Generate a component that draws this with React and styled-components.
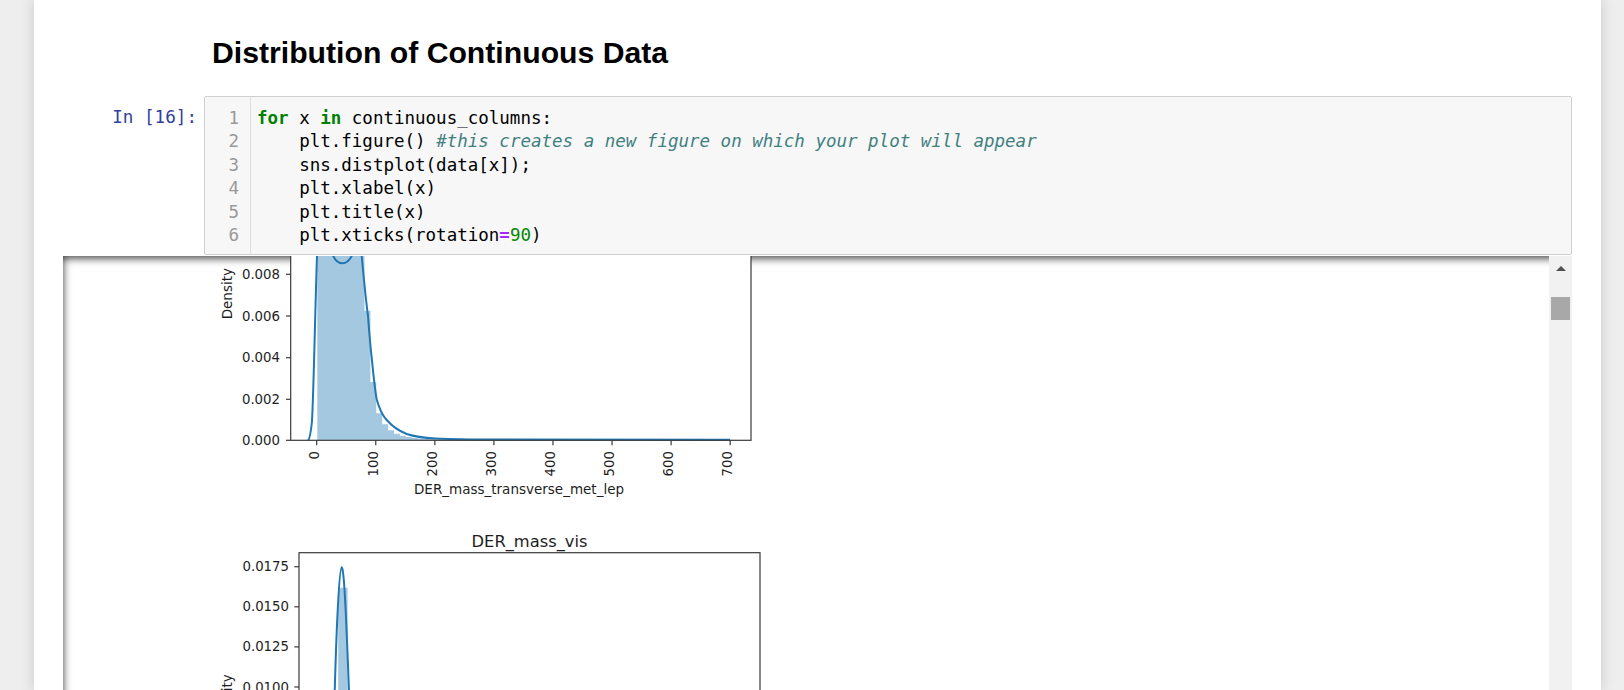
import styled, { createGlobalStyle } from "styled-components";

const GlobalStyle = createGlobalStyle`
  html, body {
    margin: 0;
    height: 100%;
    overflow: hidden;
    background: #eeeeee;
  }
  #root {
    height: 100%;
  }
`;

const Page = styled.div`
  height: 100vh;
  box-sizing: border-box;
  padding: 0 23px 0 34px;
  display: flex;
`;

const Notebook = styled.div`
  flex: 1;
  min-width: 0;
  background: #fff;
  box-shadow: 0 0 12px 1px rgba(87, 87, 87, 0.2);
  padding: 36px 29px 0 29px;
  display: flex;
  flex-direction: column;
  overflow: hidden;
`;

const CellRow = styled.div`
  display: grid;
  grid-template-columns: 141px 1fr;
  margin-bottom: ${(p) => p.$gap || 0}px;
`;

const Title = styled.h1`
  margin: 0;
  padding-left: 8px;
  font-family: "Liberation Sans", Arial, sans-serif;
  font-weight: bold;
  font-size: 30.2px;
  line-height: 34px;
  color: #000;
`;

const Prompt = styled.div`
  font-family: "DejaVu Sans Mono", monospace;
  font-size: 17.6px;
  line-height: 23.5px;
  color: #303f9f;
  text-align: right;
  padding: 10px 7px 0 0;
`;

const CodeBox = styled.div`
  display: flex;
  border: 1px solid #cfcfcf;
  border-radius: 2px;
  background: #f7f7f7;
  font-family: "DejaVu Sans Mono", monospace;
  font-size: 17.5px;
  line-height: 23.5px;
`;

const Gutter = styled.div`
  width: 46px;
  box-sizing: border-box;
  border-right: 1px solid #dddddd;
  padding: 9.5px 11px 6.5px 0;
  text-align: right;
  color: #999;
`;

const Code = styled.div`
  padding: 9.5px 0 6.5px 6px;
  color: #000;
`;

const Line = styled.div`
  white-space: pre;
`;

const tokenStyles = {
  kw: "color: #008000; font-weight: bold;",
  cm: "color: #408080; font-style: italic;",
  op: "color: #aa22ff; font-weight: bold;",
  num: "color: #008800;",
};

const Tok = styled.span`
  ${(p) => tokenStyles[p.$kind]}
`;

const OutputRow = styled.div`
  flex: none;
  height: 560px;
  margin-top: 1px;
  display: flex;
  box-shadow: inset 0 2px 8px rgba(0, 0, 0, 0.8);
`;

const OutputScroll = styled.div`
  flex: 1;
  min-width: 0;
  overflow: hidden;
  display: flex;
  flex-direction: column;
  padding-left: 141px;
`;

const Figure = styled.svg`
  display: block;
  flex-shrink: 0;
  font-family: "DejaVu Sans", sans-serif;
`;

const ScrollTrack = styled.div`
  width: 23px;
  background: #f1f1f1;
  display: flex;
  flex-direction: column;
  align-items: center;
`;

const ArrowButton = styled.div`
  height: 24px;
  display: flex;
  align-items: center;
  justify-content: center;
  &::before {
    content: "";
    border-left: 5.5px solid transparent;
    border-right: 5.5px solid transparent;
    border-bottom: 5.5px solid #505050;
  }
`;

const Thumb = styled.div`
  margin-top: 17px;
  width: 19px;
  height: 23px;
  background: #a8a8a8;
`;

const BLUE = "#1f77b4";
const FILL = "#a5c8e1";
const INK = "#1e1e1e";
const SPINE = "#3a3a3a";

const codeLines = [
  [["kw", "for"], [null, " x "], ["kw", "in"], [null, " continuous_columns:"]],
  [[null, "    plt.figure() "], ["cm", "#this creates a new figure on which your plot will appear"]],
  [[null, "    sns.distplot(data[x]);"]],
  [[null, "    plt.xlabel(x)"]],
  [[null, "    plt.title(x)"]],
  [[null, "    plt.xticks(rotation"], ["op", "="], ["num", "90"], [null, ")"]],
];

// histogram heights (px) for the first figure, bin width 5.9px
const hist1 = [
  240, 330, 345, 320, 300, 310, 290, 230, 129.6, 58.3, 27, 16, 10, 6.5, 4.5, 3.2,
  2.4, 1.8, 1.4, 1.1, 0.9, 0.8, 0.7, 0.6, 0.6, 0.5, 0.5, 0.5, 0.4, 0.4, 0.4, 0.4,
  0.4, 0.4, 0.4, 0.4, 0.3, 0.3, 0.3, 0.3, 0.3, 0.3, 0.3, 0.3, 0.3, 0.3, 0.3, 0.3,
  0.3, 0.3, 0.3, 0.3, 0.3, 0.3, 0.3, 0.3, 0.3, 0.3, 0.3, 0.3, 0.3, 0.3, 0.3, 0.3,
  0.3, 0.3, 0.3, 0.3, 0.3, 0.3,
];

function stepPath(x0, w, base, heights) {
  let d = `M${x0},${base}`;
  heights.forEach((h, i) => {
    d += ` L${x0 + i * w},${base - h} L${x0 + (i + 1) * w},${base - h}`;
  });
  return d + ` L${x0 + heights.length * w},${base} Z`;
}

const yTicks1 = [
  ["0.008", 18.3],
  ["0.006", 60],
  ["0.004", 101.7],
  ["0.002", 143.3],
  ["0.000", 184.3],
];

const yTicks2 = ["0.0175", "0.0150", "0.0125", "0.0100", "0.0075", "0.0050", "0.0025", "0.0000"];

function TransverseFigure() {
  const base = 184.3;
  return (
    <Figure width="570" height="262">
      <rect x="86.7" y="-120" width="460.3" height={base + 120} fill="#fff" />
      <path d={stepPath(113.3, 5.9, base, hist1)} fill={FILL} />
      <path
        d="M104,184.3 C106,183 107,175 108,165 C109.5,140 111,60 113,0 C114,-30 116,-50 120,-50 C124,-50 127,-10 129.3,0 C132,6 135,7.3 138.7,7.3 C142,7.3 145,5 147.7,0 C149,-10 152,-40 154,-30 C156,-15 157,-5 157.7,0 C160,25 162,45 164,60 C165.5,80 166.5,92 167.7,101.7 C169.5,120 171,135 172.7,143.3 C175,152 178,159 182.7,164 C188,170 195,175 202.7,178 C212,181 222,182 231,182.5 C250,183.2 265,183.5 276,183.5 L526,183.8"
        fill="none"
        stroke={BLUE}
        strokeWidth="2"
      />
      <rect x="86.7" y="-120" width="460.3" height={base + 120} fill="none" stroke={SPINE} strokeWidth="1.2" />
      {yTicks1.map(([label, y]) => (
        <g key={label}>
          <line x1="82" x2="86.7" y1={y} y2={y} stroke={SPINE} strokeWidth="1.2" />
          <text x="76" y={y} textAnchor="end" dominantBaseline="central" fontSize="13.3" fill={INK}>
            {label}
          </text>
        </g>
      ))}
      {[0, 100, 200, 300, 400, 500, 600, 700].map((v, i) => {
        const x = 112.7 + i * 59.07;
        return (
          <g key={v}>
            <line x1={x} x2={x} y1={base} y2={base + 5} stroke={SPINE} strokeWidth="1.2" />
            <text
              x={x - 2.5}
              y="195"
              transform={`rotate(-90 ${x - 2.5} 195)`}
              textAnchor="end"
              dominantBaseline="central"
              fontSize="13.3"
              fill={INK}
            >
              {v}
            </text>
          </g>
        );
      })}
      <text x="23.3" y="37.7" transform="rotate(-90 23.3 37.7)" textAnchor="middle" dominantBaseline="central" fontSize="13.5" fill={INK}>
        Density
      </text>
      <text x="315" y="233.3" textAnchor="middle" dominantBaseline="central" fontSize="13.5" fill={INK}>
        DER_mass_transverse_met_lep
      </text>
    </Figure>
  );
}

function MassVisFigure() {
  const top = 34.7;
  const base = 329.4;
  return (
    <Figure width="570" height="340">
      <text x="325.5" y="23" textAnchor="middle" dominantBaseline="central" fontSize="16.3" fill={INK}>
        DER_mass_vis
      </text>
      <rect x="95" y={top} width="461" height={base - top} fill="#fff" />
      <path d={stepPath(129.5, 4.7, base, [150, 259.7, 259.7, 110, 30, 8])} fill={FILL} />
      <path
        d="M118,329.4 C125,329 128,300 130,200 C132,120 135,50 137.7,49.3 C140.5,49 143,120 146,200 C148,280 151,327 158,329 L540,329.4"
        fill="none"
        stroke={BLUE}
        strokeWidth="2"
      />
      <rect x="95" y={top} width="461" height={base - top} fill="none" stroke={SPINE} strokeWidth="1.2" />
      {yTicks2.map((label, i) => {
        const y = 48.7 + i * 40.1;
        return (
          <g key={label}>
            <line x1="90.3" x2="95" y1={y} y2={y} stroke={SPINE} strokeWidth="1.2" />
            <text x="85" y={y} textAnchor="end" dominantBaseline="central" fontSize="13.3" fill={INK}>
              {label}
            </text>
          </g>
        );
      })}
      <text x="22.7" y="182" transform="rotate(-90 22.7 182)" textAnchor="middle" dominantBaseline="central" fontSize="13.5" fill={INK}>
        Density
      </text>
    </Figure>
  );
}

export default function App() {
  return (
    <>
      <GlobalStyle />
      <Page>
        <Notebook>
          <CellRow $gap={26}>
            <div />
            <Title>Distribution of Continuous Data</Title>
          </CellRow>
          <CellRow>
            <Prompt>In [16]:</Prompt>
            <CodeBox>
              <Gutter>
                {codeLines.map((_, i) => (
                  <Line key={i}>{i + 1}</Line>
                ))}
              </Gutter>
              <Code>
                {codeLines.map((parts, i) => (
                  <Line key={i}>
                    {parts.map(([kind, text], j) =>
                      kind ? (
                        <Tok key={j} $kind={kind}>
                          {text}
                        </Tok>
                      ) : (
                        <span key={j}>{text}</span>
                      )
                    )}
                  </Line>
                ))}
              </Code>
            </CodeBox>
          </CellRow>
          <OutputRow>
            <OutputScroll>
              <TransverseFigure />
              <MassVisFigure />
            </OutputScroll>
            <ScrollTrack>
              <ArrowButton />
              <Thumb />
            </ScrollTrack>
          </OutputRow>
        </Notebook>
      </Page>
    </>
  );
}
